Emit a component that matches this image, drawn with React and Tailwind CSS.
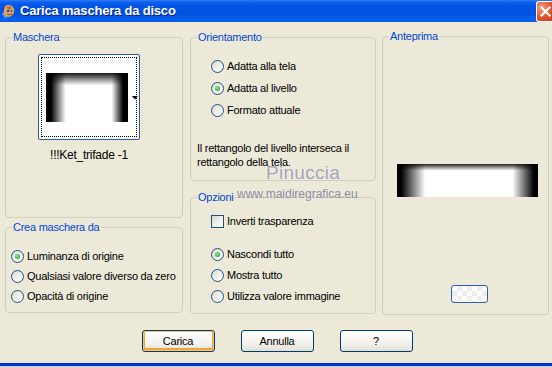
import React from "react";

function Radio({ checked }) {
  return (
    <span className="flex h-[13px] w-[13px] shrink-0 items-center justify-center rounded-full border border-[#1C5180] bg-[linear-gradient(135deg,#D8D8CF_0%,#F2F2EC_55%,#FFFFFF_100%)]">
      {checked && (
        <span className="h-[5px] w-[5px] rounded-full bg-[radial-gradient(circle_at_40%_40%,#8BE68B,#1E9A1E)]" />
      )}
    </span>
  );
}

function RadioRow({ checked, label, h }) {
  return (
    <div className={`flex items-center gap-[3px] ${h}`}>
      <Radio checked={checked} />
      <span>{label}</span>
    </div>
  );
}

function Legend({ children }) {
  return (
    <legend className="ml-[6px] px-[1px] leading-[13px] text-[#0046D5]">{children}</legend>
  );
}

function Btn({ children, def }) {
  return (
    <button
      className={`flex h-[22px] w-[73px] items-center justify-center rounded-[3px] border border-[#003C74] bg-[linear-gradient(to_bottom,#FFFFFF_0%,#F4F3EE_60%,#E3E0D6_100%)] leading-none text-black ${
        def ? "shadow-[inset_0_0_0_1px_#F9C56A,inset_0_-1px_0_2px_#EFA538]" : ""
      }`}
    >
      {children}
    </button>
  );
}

export default function App() {
  return (
    <div className="relative h-[368px] w-[552px] overflow-hidden bg-[#ECE9D8] font-['Liberation_Sans',Arial,sans-serif] text-[11px] tracking-[-0.25px] text-black">
      {/* Title bar */}
      <div className="flex h-[22px] items-center bg-[linear-gradient(to_bottom,#2A7BF5_0%,#0A5CEC_12%,#0054E3_30%,#0052DE_65%,#0960EE_85%,#0A5AE5_100%)]">
        <svg width="15" height="15" viewBox="0 0 15 15" className="ml-[2px] shrink-0">
          <path d="M3 2 C6 0 11 1 12 5 C13 9 10 13 6 13 C3 13 1 10 2 6 Z" fill="#E8A65A" />
          <path d="M4 3 C6 2 9 2 10 4 L7 6 Z" fill="#C46A2A" />
          <circle cx="6" cy="7" r="1.3" fill="#1B4FB8" />
          <circle cx="9.5" cy="7" r="1.1" fill="#1B4FB8" />
          <path d="M5 10 Q7.5 11.5 10 10" stroke="#8A3A12" strokeWidth="1" fill="none" />
          <path d="M0.5 9 L4 14" stroke="#4FA0F0" strokeWidth="2" />
        </svg>
        <span className="ml-[3px] text-[13px] font-bold tracking-[-0.2px] text-white [text-shadow:1px_1px_0_#0A1E8C]">
          Carica maschera da disco
        </span>
        <div className="ml-auto mt-[1px] flex h-[21px] w-[16px] items-center justify-center rounded-l-[3px] border-y border-l border-white bg-[radial-gradient(circle_at_30%_30%,#F0A082,#E2552F_55%,#C4401D)]">
          <svg width="11" height="11" viewBox="0 0 11 11" className="ml-[2px]">
            <path d="M1.5 1.5 L9.5 9.5 M9.5 1.5 L1.5 9.5" stroke="white" strokeWidth="2.2" strokeLinecap="square" />
          </svg>
        </div>
      </div>

      {/* Body */}
      <div className="flex pl-[5px] pt-[8px]">
        {/* Left column */}
        <div className="mt-[1px] flex w-[178px] flex-col gap-[3px]">
          <fieldset className="h-[187px] rounded-[4px] border border-[#D0D0BF]">
            <Legend>Maschera</Legend>
            <div className="ml-[32px] mt-[10px] w-[102px]">
              <div className="relative h-[86px] w-[102px] rounded-[2px] border border-[#2B5C9E] bg-white p-[2px]">
                <div className="h-full w-full border border-dotted border-black">
                  <div className="ml-[4px] mt-[15px] h-[49px] w-[82px] bg-[linear-gradient(to_bottom,rgba(0,0,0,0.9)_0%,rgba(0,0,0,0)_25%),linear-gradient(to_right,#000_0%,#000_6%,#fff_24%,#fff_80%,#000_94%,#000_100%)]" />
                </div>
                <svg width="6" height="4" viewBox="0 0 6 4" className="absolute left-[93px] top-[41px]">
                  <path d="M0 0 L6 0 L3 3.5 Z" fill="black" />
                </svg>
              </div>
              <div className="mt-[8px] text-center text-[12px] leading-[14px]">!!!Ket_trifade -1</div>
            </div>
          </fieldset>
          <fieldset className="h-[92px] rounded-[4px] border border-[#D0D0BF]">
            <Legend>Crea maschera da</Legend>
            <div className="ml-[5px] mt-[12px]">
              <RadioRow checked label="Luminanza di origine" h="h-[20px]" />
              <RadioRow label="Qualsiasi valore diverso da zero" h="h-[20px]" />
              <RadioRow label="Opacità di origine" h="h-[20px]" />
            </div>
          </fieldset>
        </div>

        {/* Middle column */}
        <div className="ml-[7px] mt-[1px] flex w-[186px] flex-col gap-[10px]">
          <fieldset className="h-[150px] rounded-[4px] border border-[#D0D0BF]">
            <Legend>Orientamento</Legend>
            <div className="ml-[20px] mt-[11px]">
              <RadioRow label="Adatta alla tela" h="h-[22px]" />
              <RadioRow checked label="Adatta al livello" h="h-[22px]" />
              <RadioRow label="Formato attuale" h="h-[22px]" />
            </div>
            <p className="ml-[6px] mt-[20px] leading-[14px]">
              Il rettangolo del livello interseca il
              <br />
              rettangolo della tela.
            </p>
          </fieldset>
          <fieldset className="h-[123px] rounded-[4px] border border-[#D0D0BF]">
            <Legend>Opzioni</Legend>
            <div className="ml-[20px] mt-[7px]">
              <div className="flex h-[21px] items-center gap-[3px]">
                <span className="h-[13px] w-[13px] shrink-0 border border-[#1C5180] bg-[linear-gradient(135deg,#D8D8CF_0%,#F2F2EC_55%,#FFFFFF_100%)]" />
                <span>Inverti trasparenza</span>
              </div>
              <div className="mt-[12px]">
                <RadioRow checked label="Nascondi tutto" h="h-[21px]" />
                <RadioRow label="Mostra tutto" h="h-[21px]" />
                <RadioRow label="Utilizza valore immagine" h="h-[21px]" />
              </div>
            </div>
          </fieldset>
        </div>

        {/* Right column */}
        <div className="ml-[6px] w-[167px]">
          <fieldset className="h-[285px] rounded-[4px] border border-[#D0D0BF]">
            <Legend>Anteprima</Legend>
            <div className="ml-[14px] mt-[121px] h-[33px] w-[141px] bg-[linear-gradient(to_bottom,rgba(0,0,0,0.85)_0%,rgba(0,0,0,0)_20%),linear-gradient(to_right,#000_0%,#000_3%,#fff_20%,#fff_82%,#000_97%,#000_100%)]" />
            <div className="ml-[68px] mt-[88px] h-[18px] w-[37px] rounded-[3px] border border-[#2C5FA8] bg-[repeating-conic-gradient(#EDEDED_0%_25%,#FFFFFF_0%_50%)] bg-[length:10px_10px]" />
          </fieldset>
        </div>
      </div>

      {/* Buttons */}
      <div className="mt-[15px] flex justify-center gap-[26px] pl-[2px]">
        <Btn def>Carica</Btn>
        <Btn>Annulla</Btn>
        <Btn>?</Btn>
      </div>

      {/* Window bottom frame */}
      <div className="mt-[11px] h-[3px] bg-[#0831D9]" />
      <div className="h-[2px] bg-[#D8D6CC]" />

      {/* Watermark */}
      <span className="pointer-events-none absolute left-[266px] top-[163px] text-[19px] leading-[20px] tracking-[0.3px] text-[#A3A3B8] [text-shadow:0_0_1px_#ffffff]">
        Pinuccia
      </span>
      <span className="pointer-events-none absolute left-[237px] top-[187px] text-[12px] leading-[14px] tracking-[0px] text-[#8E8EA4]">
        www.maidiregrafica.eu
      </span>
    </div>
  );
}
